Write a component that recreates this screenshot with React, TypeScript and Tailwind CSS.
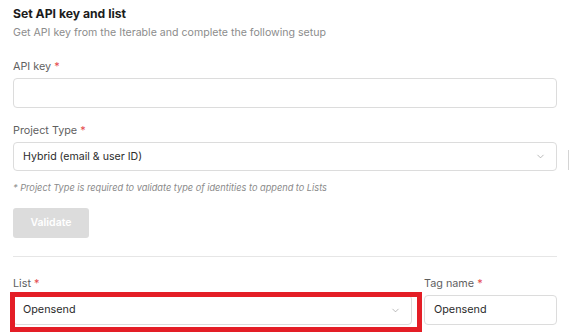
import { ChevronDown } from "lucide-react";

function Label({ text }: { text: string }) {
  return (
    <div className="text-[10.8px] leading-[16px] text-[#5f5f5f]">
      {text} <span className="text-[#e5484d]">*</span>
    </div>
  );
}

export default function App() {
  return (
    <div
      className="relative w-[570px] h-[335px] overflow-hidden bg-white px-[13px] pt-[5px]"
      style={{ fontFamily: "Inter, 'Noto Sans', sans-serif" }}
    >
      {/* header */}
      <h1 className="text-[12.2px] leading-[18px] font-bold text-[#1c1c1c]">Set API key and list</h1>
      <p className="mt-[2px] text-[10.6px] leading-[16px] text-[#8c8c8c]">
        Get API key from the Iterable and complete the following setup
      </p>

      {/* api key */}
      <div className="mt-[18px]">
        <Label text="API key" />
        <div className="mt-[3px] h-[30px] w-full rounded-[4px] border border-[#dcdcdc] bg-white" />
      </div>

      {/* project type */}
      <div className="mt-[15px]">
        <Label text="Project Type" />
        <div className="mt-[3px] flex h-[29px] w-full items-center justify-between rounded-[4px] border border-[#dcdcdc] bg-white pl-[9px] pr-[10px]">
          <span className="text-[10.6px] text-[#2b2b2b]">Hybrid (email &amp; user ID)</span>
          <ChevronDown size={11} strokeWidth={1.5} className="text-[#9a9a9a]" />
        </div>
      </div>

      <p className="mt-[10px] text-[9.2px] leading-[14px] italic text-[#8a8a8a]">
        * Project Type is required to validate type of identities to append to Lists
      </p>

      <button className="mt-[13px] flex h-[30px] w-[76px] items-center justify-center rounded-[3px] bg-[#dcdcdc] text-[10.5px] font-semibold text-white">
        Validate
      </button>

      <div className="mt-[18px] h-px w-full bg-[#e6e6e6]" />

      {/* list + tag */}
      <div className="mt-[19px] flex gap-[12px]">
        <div className="w-[399px]">
          <Label text="List" />
          <div className="relative mt-[3px]">
            <div className="flex h-[30px] w-full items-center justify-between rounded-[4px] border border-[#dcdcdc] bg-white pl-[9px] pr-[10px]">
              <span className="text-[10.8px] text-[#2b2b2b]">Opensend</span>
              <ChevronDown size={11} strokeWidth={1.5} className="text-[#9a9a9a]" />
            </div>
            {/* annotation box */}
            <div className="absolute -left-[3px] -top-[3px] -right-[10px] -bottom-[7px] border-[5px] border-[#e41e26]" />
          </div>
        </div>
        <div className="flex-1">
          <Label text="Tag name" />
          <div className="mt-[3px] flex h-[30px] w-full items-center rounded-[4px] border border-[#dcdcdc] bg-white pl-[9px]">
            <span className="text-[10.8px] text-[#2b2b2b]">Opensend</span>
          </div>
        </div>
      </div>

      <div className="absolute right-[1px] top-[150px] h-[20px] w-px bg-[#d4d4d4]" />
    </div>
  );
}
